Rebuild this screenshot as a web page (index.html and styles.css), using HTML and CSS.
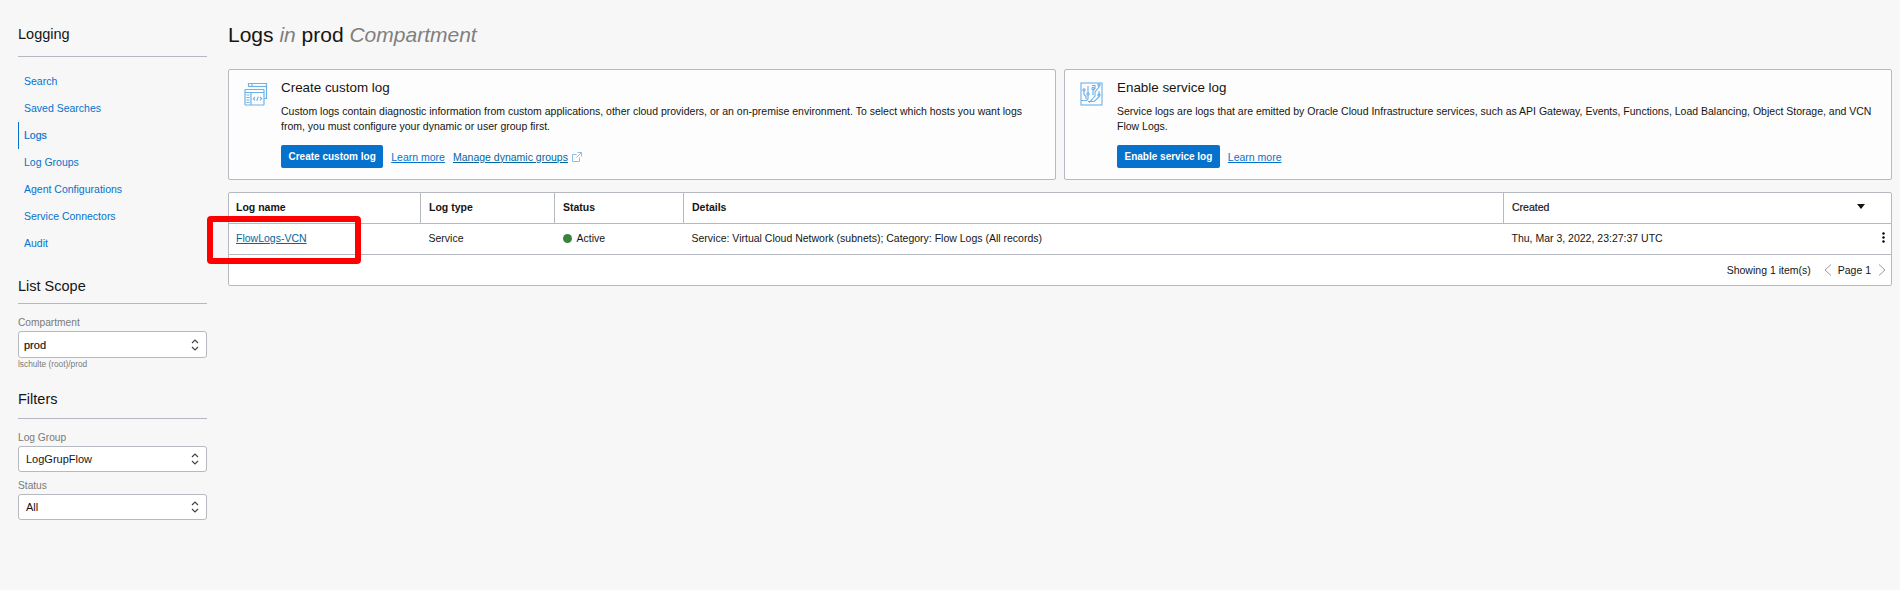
FILE: index.html
```html
<!DOCTYPE html>
<html lang="en">

<head>
    <meta charset="UTF-8">
    <title>Logs in prod Compartment</title>
    <link rel="stylesheet" href="styles.css">
</head>

<body>
    <div class="page">
        <aside class="sidebar">
            <h2 class="side-title side-title-first">Logging</h2>
            <nav class="side-nav">
                <a href="#">Search</a>
                <a href="#">Saved Searches</a>
                <a href="#" class="current">Logs</a>
                <a href="#">Log Groups</a>
                <a href="#">Agent Configurations</a>
                <a href="#">Service Connectors</a>
                <a href="#">Audit</a>
            </nav>

            <h2 class="side-title side-title-scope">List Scope</h2>
            <label class="field-label">Compartment</label>
            <div class="picker picker-tall">
                <span>prod</span>
                <svg width="8" height="14" viewBox="0 0 8 14"><path d="M1 5l3-3 3 3M1 9l3 3 3-3" fill="none" stroke="#444" stroke-width="1.2"/></svg>
            </div>
            <div class="field-hint">lschulte (root)/prod</div>

            <h2 class="side-title side-title-filters">Filters</h2>
            <label class="field-label">Log Group</label>
            <div class="picker picker-wide">
                <span>LogGrupFlow</span>
                <svg width="8" height="14" viewBox="0 0 8 14"><path d="M1 5l3-3 3 3M1 9l3 3 3-3" fill="none" stroke="#444" stroke-width="1.2"/></svg>
            </div>
            <label class="field-label field-label-next">Status</label>
            <div class="picker picker-wide">
                <span>All</span>
                <svg width="8" height="14" viewBox="0 0 8 14"><path d="M1 5l3-3 3 3M1 9l3 3 3-3" fill="none" stroke="#444" stroke-width="1.2"/></svg>
            </div>
        </aside>

        <main class="content">
            <h1 class="page-title">Logs <em>in</em> prod <em>Compartment</em></h1>

            <div class="cards">
                <section class="card">
                    <svg class="card-icon" width="24" height="24" viewBox="0 0 24 24" fill="none" stroke="#6db1ea" stroke-width="1.2">
                        <path d="M4.5 5V1.5h18v15H20"/>
                        <path d="M4.5 4.5h18"/>
                        <path d="M8 1.5v3"/>
                        <rect x="1" y="7.5" width="19" height="15.5" rx="0.5"/>
                        <path d="M1 10.5h19M7 10.5V23"/>
                        <path d="M2.5 13h3M2.5 15.5h3M2.5 18h3M2.5 20.5h3"/>
                        <path d="M11 15l-1.6 1.7 1.6 1.7M16 15l1.6 1.7-1.6 1.7M14.2 14.6l-1.4 4.2"/>
                    </svg>
                    <div class="card-body">
                        <h3>Create custom log</h3>
                        <p>Custom logs contain diagnostic information from custom applications, other cloud providers, or an on-premise environment. To select which hosts you want logs from, you must configure your dynamic or user group first.</p>
                        <div class="card-actions">
                            <button type="button">Create custom log</button>
                            <a href="#" class="link">Learn more</a>
                            <a href="#" class="link link-dark">Manage dynamic groups</a>
                            <svg class="ext-icon" width="10" height="10" viewBox="0 0 10 10" fill="none" stroke="#7db9ec" stroke-width="0.9"><path d="M7.5 5.5v4H.5v-7h4M5.5.5h4v4M9.5.5l-5 5"/></svg>
                        </div>
                    </div>
                </section>

                <section class="card">
                    <svg class="card-icon" width="24" height="24" viewBox="0 0 24 24" fill="none" stroke="#6db1ea" stroke-width="1.1">
                        <rect x="1" y="1" width="21" height="22"/>
                        <path d="M4 9v3.5l2 2V17M8 4v7M8 13v4l-1.5 1.5H1M13 7.5V13M12 3.5h3v3l-2 2M19 3.5v1.5l-4 5v4l-3 3.5-3 3M19 9v6l-5 4.5h-6"/>
                        <circle cx="4" cy="8" r="1.1"/>
                        <circle cx="8" cy="12" r="1.1"/>
                        <circle cx="13" cy="6.5" r="1.1"/>
                        <circle cx="19" cy="3" r="1.1"/>
                        <circle cx="19" cy="13" r="1.1"/>
                    </svg>
                    <div class="card-body">
                        <h3>Enable service log</h3>
                        <p>Service logs are logs that are emitted by Oracle Cloud Infrastructure services, such as API Gateway, Events, Functions, Load Balancing, Object Storage, and VCN Flow Logs.</p>
                        <div class="card-actions">
                            <button type="button">Enable service log</button>
                            <a href="#" class="link">Learn more</a>
                        </div>
                    </div>
                </section>
            </div>

            <div class="table-box">
                <table class="log-table">
                    <colgroup>
                        <col class="col-name">
                        <col class="col-type">
                        <col class="col-status">
                        <col class="col-details">
                        <col>
                    </colgroup>
                    <thead>
                        <tr>
                            <th>Log name</th>
                            <th>Log type</th>
                            <th>Status</th>
                            <th>Details</th>
                            <th>
                                <div class="sort-head">
                                    Created
                                    <svg width="8" height="5" viewBox="0 0 8 5"><path d="M0 0h8L4 5z" fill="#161513"/></svg>
                                </div>
                            </th>
                        </tr>
                    </thead>
                    <tbody>
                        <tr>
                            <td><a href="#" class="link link-dark">FlowLogs-VCN</a></td>
                            <td>Service</td>
                            <td><span class="status-dot"></span>Active</td>
                            <td>Service: Virtual Cloud Network (subnets); Category: Flow Logs (All records)</td>
                            <td>
                                <div class="row-end">
                                    Thu, Mar 3, 2022, 23:27:37 UTC
                                    <svg width="3" height="11" viewBox="0 0 3 11"><circle cx="1.5" cy="1.5" r="1.2"/><circle cx="1.5" cy="5.5" r="1.2"/><circle cx="1.5" cy="9.5" r="1.2"/></svg>
                                </div>
                            </td>
                        </tr>
                    </tbody>
                </table>
                <div class="table-foot">
                    <span>Showing 1 item(s)</span>
                    <svg class="pager-prev" width="8" height="12" viewBox="0 0 8 12"><path d="M7 .5L1 6l6 5.5" fill="none" stroke="#9a9a9a"/></svg>
                    <span>Page 1</span>
                    <svg class="pager-next" width="8" height="12" viewBox="0 0 8 12"><path d="M1 .5L7 6l-6 5.5" fill="none" stroke="#9a9a9a"/></svg>
                </div>
            </div>
        </main>
    </div>

    <!-- annotation drawn over the screenshot -->
    <div class="callout"></div>
</body>

</html>
```

FILE: styles.css
```css
* {
    box-sizing: border-box;
}

body {
    margin: 0;
    background-color: #f7f7f7;
    color: #161513;
    font-family: "Liberation Sans", Arial, sans-serif;
    font-size: 10.5px;
}

a {
    text-decoration: none;
}

.page {
    display: flex;
    height: 590px;
    padding: 0 8px 0 18px;
    gap: 21px;
}

/* sidebar */

.sidebar {
    width: 189px;
    flex-shrink: 0;
}

.side-title {
    margin: 0;
    height: 36px;
    padding-bottom: 9px;
    border-bottom: 1px solid #b6bac0;
    font-size: 14.5px;
    font-weight: normal;
    line-height: 26px;
}

.side-title-first {
    margin-top: 21px;
}

.side-title-scope {
    height: 37px;
    padding-top: 6px;
}

.side-title-filters {
    margin-top: 14px;
    padding-top: 3px;
}

.side-nav {
    display: flex;
    flex-direction: column;
    margin-top: 11px;
}

.side-nav a {
    height: 27px;
    padding-left: 5px;
    border-left: 1px solid transparent;
    color: #0572ce;
    line-height: 27px;
}

.side-nav a.current {
    border-left-color: #0572ce;
    -webkit-text-stroke: 0.2px #0572ce;
}

.side-nav + .side-title {
    margin-top: 10px;
}

.field-label {
    display: block;
    margin-top: 12px;
    color: #7a7a7a;
    font-size: 10.2px;
    line-height: 14px;
}

.field-label-next {
    margin-top: 7px;
}

.picker {
    display: flex;
    align-items: center;
    justify-content: space-between;
    margin-top: 1px;
    padding: 0 7px 0 7px;
    background-color: #fff;
    border: 1px solid #b6bac0;
    border-radius: 3px;
    font-size: 11px;
}

.picker-tall {
    height: 27px;
    padding-left: 5px;
}

.picker-tall span {
    -webkit-text-stroke: 0.2px #161513;
}

.picker-wide {
    height: 26px;
}

.field-hint {
    margin-top: 1px;
    color: #7a7a7a;
    font-size: 8.3px;
    line-height: 10px;
}

/* main column */

.content {
    flex: 1;
    min-width: 0;
}

.page-title {
    margin: 20px 0 0;
    font-size: 21px;
    font-weight: normal;
    line-height: 29px;
}

.page-title em {
    color: #7f7f7f;
}

.cards {
    display: flex;
    gap: 8px;
    margin-top: 20px;
}

.card {
    display: flex;
    flex: 1;
    height: 111px;
    padding: 9px 15px;
    background-color: #fdfdfd;
    border: 1px solid #b6bac0;
    border-radius: 2px;
}

.card-icon {
    flex-shrink: 0;
    margin: 3px 13px 0 0;
}

.card-body h3 {
    margin: 0;
    font-size: 13.4px;
    font-weight: normal;
    line-height: 17px;
}

.card-body p {
    margin: 8px 0 0;
    height: 30px;
    font-size: 10.5px;
    line-height: 15px;
}

.card-actions {
    display: flex;
    align-items: center;
    gap: 8px;
    margin-top: 11px;
}

.card-actions button {
    height: 23px;
    padding: 0 7.5px;
    background-color: #0572ce;
    color: #fff;
    border: none;
    border-radius: 2px;
    font-family: inherit;
    font-size: 10px;
    font-weight: bold;
}

.link {
    color: #0572ce;
    font-size: 10.5px;
    text-decoration: underline;
}

.link-dark {
    color: #04669e;
}

.ext-icon {
    margin-left: -4px;
}

/* table */

.table-box {
    margin-top: 12px;
    background-color: #fff;
    border: 1px solid #b6bac0;
    border-radius: 2px;
}

.log-table {
    width: 100%;
    border-collapse: collapse;
    table-layout: fixed;
}

.col-name {
    width: 191px;
}

.col-type {
    width: 134px;
}

.col-status {
    width: 129px;
}

.col-details {
    width: 820px;
}

.log-table th,
.log-table td {
    height: 30px;
    padding: 0 6px 2px 8.5px;
    border-bottom: 1px solid #b6bac0;
    font-size: 10.5px;
    text-align: left;
}

.log-table td {
    height: 31px;
}

.log-table th:first-child,
.log-table td:first-child {
    padding-left: 7px;
}

.log-table th {
    border-left: 1px solid #b6bac0;
    font-weight: bold;
}

.log-table th:first-child {
    border-left: none;
}

.log-table th:last-child {
    font-weight: normal;
    -webkit-text-stroke: 0.2px #161513;
}

.sort-head,
.row-end {
    display: flex;
    align-items: center;
    justify-content: space-between;
}

.sort-head {
    padding-right: 20px;
}

.status-dot {
    display: inline-block;
    width: 9px;
    height: 9px;
    margin-right: 5px;
    background-color: #3a833c;
    border-radius: 50%;
    vertical-align: -1px;
}

.table-foot {
    display: flex;
    align-items: center;
    justify-content: flex-end;
    height: 30px;
    padding-right: 5px;
    font-size: 10.5px;
}

.pager-prev {
    margin: 0 6px 0 13px;
}

.pager-next {
    margin-left: 7px;
}

/* red annotation box */

.callout {
    position: absolute;
    left: 207px;
    top: 216px;
    width: 154px;
    height: 48px;
    border: 6px solid #fe0000;
    border-radius: 4px;
}
```
